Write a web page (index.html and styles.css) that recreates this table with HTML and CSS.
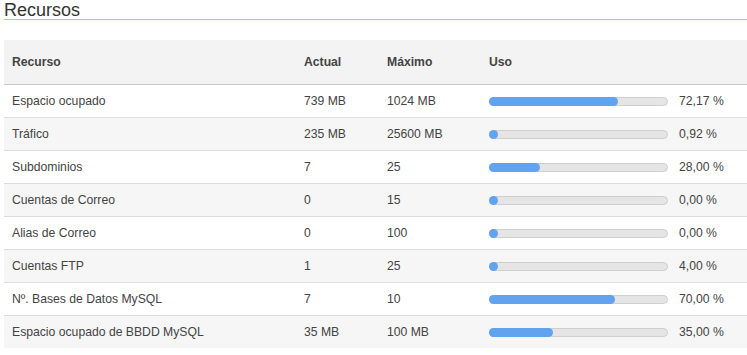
FILE: index.html
```html
<!DOCTYPE html>
<html lang="es">
<head>
<meta charset="utf-8">
<title>Recursos</title>
<link rel="stylesheet" href="styles.css">
</head>
<body>
<div class="page">
  <h2 class="title">Recursos</h2>
  <table class="res">
    <colgroup>
      <col class="c1"><col class="c2"><col class="c3"><col class="c4">
    </colgroup>
    <thead>
      <tr><th>Recurso</th><th>Actual</th><th>Máximo</th><th>Uso</th></tr>
    </thead>
    <tbody>
      <tr><td>Espacio ocupado</td><td>739 MB</td><td>1024 MB</td><td><div class="uso"><div class="bar"><div class="fill" style="width:73%"></div></div><span class="pct">72,17 %</span></div></td></tr>
      <tr><td>Tráfico</td><td>235 MB</td><td>25600 MB</td><td><div class="uso"><div class="bar"><div class="fill" style="width:0.92%"></div></div><span class="pct">0,92 %</span></div></td></tr>
      <tr><td>Subdominios</td><td>7</td><td>25</td><td><div class="uso"><div class="bar"><div class="fill" style="width:29%"></div></div><span class="pct">28,00 %</span></div></td></tr>
      <tr><td>Cuentas de Correo</td><td>0</td><td>15</td><td><div class="uso"><div class="bar"><div class="fill" style="width:0%"></div></div><span class="pct">0,00 %</span></div></td></tr>
      <tr><td>Alias de Correo</td><td>0</td><td>100</td><td><div class="uso"><div class="bar"><div class="fill" style="width:0%"></div></div><span class="pct">0,00 %</span></div></td></tr>
      <tr><td>Cuentas FTP</td><td>1</td><td>25</td><td><div class="uso"><div class="bar"><div class="fill" style="width:4%"></div></div><span class="pct">4,00 %</span></div></td></tr>
      <tr><td>Nº. Bases de Datos MySQL</td><td>7</td><td>10</td><td><div class="uso"><div class="bar"><div class="fill" style="width:71%"></div></div><span class="pct">70,00 %</span></div></td></tr>
      <tr><td>Espacio ocupado de BBDD MySQL</td><td>35 MB</td><td>100 MB</td><td><div class="uso"><div class="bar"><div class="fill" style="width:36%"></div></div><span class="pct">35,00 %</span></div></td></tr>
    </tbody>
  </table>
</div>
</body>
</html>
```

FILE: styles.css
```css
html, body {
  margin: 0;
  padding: 0;
  background: #fff;
  overflow: hidden;
}
body {
  font-family: "Liberation Sans", Arial, sans-serif;
  color: #444;
}
.page {
  width: 743px;
  padding-left: 4px;
}
.title {
  margin: 1px 0 0 0;
  font-size: 18px;
  line-height: 18px;
  font-weight: normal;
  color: #333;
  border-bottom: 1px solid #a4c2ea;
}
.res {
  margin-top: 20px;
  width: 760px;
  border-collapse: collapse;
  font-size: 12.2px;
  line-height: 18px;
}
.c1 { width: 292px; }
.c2 { width: 83px; }
.c3 { width: 102px; }
.res th {
  text-align: left;
  font-weight: bold;
  color: #444;
  background: #f3f3f3;
  padding: 13px 8px;
  border-bottom: 1px solid #c9c9c9;
}
.res td {
  padding: 7px 8px;
  border-top: 1px solid #dcdcdc;
  vertical-align: middle;
}
.res tbody tr:first-child td { border-top: 1px solid #c9c9c9; }
.res tbody tr:nth-child(even) td { background: #f6f6f6; }
.uso {
  display: flex;
  align-items: center;
  gap: 11px;
}
.bar {
  width: 177px;
  height: 7px;
  border: 1px solid #cfcfcf;
  border-radius: 5px;
  background: #e5e5e5;
  position: relative;
}
.fill {
  position: absolute;
  left: -1px;
  top: -1px;
  height: 9px;
  min-width: 9px;
  border-radius: 5px;
  background: #62a3f0;
}
.pct {
  color: #444;
}
```
